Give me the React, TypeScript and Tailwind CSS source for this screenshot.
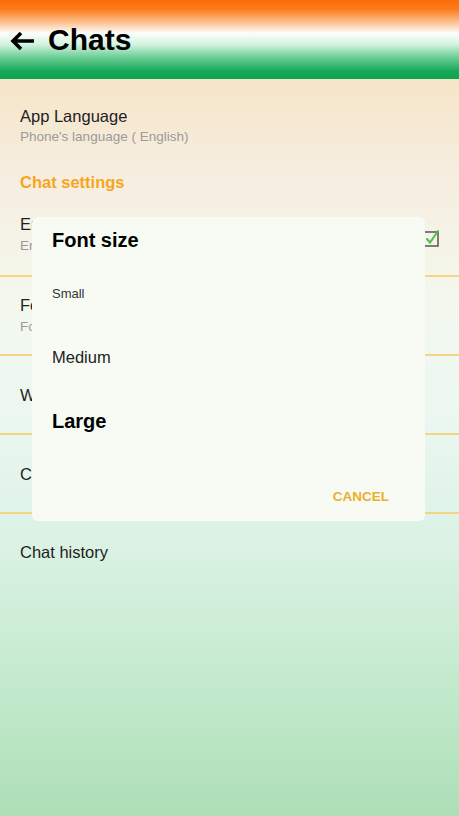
import React from "react";

const rows = [
  { title: "Enter is send", sub: "Enter key will send your message", check: true },
  { title: "Font size", sub: "Font size ( Medium )" },
  { title: "Wallpaper" },
  { title: "Chat backup" },
];

const Check = () => (
  <svg width="20" height="20" viewBox="0 0 20 20" className="shrink-0 mt-[8px]">
    <rect x="3" y="4" width="14" height="14" fill="none" stroke="#555" strokeWidth="1.5" />
    <path d="M6 11l3 3.5L17 3" fill="none" stroke="#4cc04c" strokeWidth="2" strokeLinecap="round" />
  </svg>
);

export default function App() {
  return (
    <div className="relative w-[459px] h-[816px] overflow-hidden font-['Liberation_Sans',Arial,sans-serif] bg-[linear-gradient(180deg,#f5dfb9_0%,#f6e5c9_10%,#f6eee0_22%,#f3f8ef_38%,#eaf7f0_52%,#dcf2e5_66%,#c8ecd2_80%,#addfb7_100%)]">
      <header className="h-[79px] flex items-center pl-[9px] gap-[12px] bg-[linear-gradient(180deg,#fb6c05_0%,#fc7d1e_12%,#fdc89c_30%,#fbfefb_42%,#d5f3e1_56%,#6fcf98_72%,#16a858_90%,#0da44f_100%)]">
        <svg width="27" height="22" viewBox="0 0 27 22" className="mt-[2px]">
          <path d="M25 11H4M12 3l-8 8 8 8" fill="none" stroke="#000" strokeWidth="3.6" strokeLinecap="butt" />
        </svg>
        <h1 className="text-[30px] font-bold text-black leading-none">Chats</h1>
      </header>

      <div className="pl-[20px] pt-[27px]">
        <div className="text-[16.5px] leading-[20px] text-[#1e1e1e]">App Language</div>
        <div className="mt-[2px] text-[13.5px] leading-[18px] text-[#9a9a9a]">Phone's language ( English)</div>
        <div className="mt-[26px] text-[16.5px] leading-[20px] font-bold text-[#f6a51d]">Chat settings</div>
      </div>

      <div className="mt-[1px]">
        {rows.map((r, i) => (
          <div key={r.title}>
            <div
              className={`flex items-center justify-between pl-[20px] pr-[18px] ${
                i === 0 ? "h-[82px]" : "h-[77px]"
              }`}
            >
              <div className="flex flex-col gap-[3px]">
                <div className="text-[16.5px] leading-[20px] text-[#1e1e1e]">{r.title}</div>
                {r.sub && <div className="text-[13.5px] leading-[18px] text-[#9a9a9a]">{r.sub}</div>}
              </div>
              {r.check && <Check />}
            </div>
            <div className="h-[2px] bg-[#f3d584]" />
          </div>
        ))}
        <div className="h-[77px] flex items-center pl-[20px] text-[16.5px] text-[#1e1e1e]">Chat history</div>
      </div>

      <div className="absolute left-[32px] top-[217px] w-[393px] h-[304px] rounded-[6px] bg-[#f7fbf4] pl-[20px] pt-[11px] flex flex-col">
        <div className="text-[20px] leading-[24px] font-bold text-black">Font size</div>
        <div className="mt-[33px] text-[13px] leading-[18px] text-[#333]">Small</div>
        <div className="mt-[43px] text-[16.5px] leading-[22px] text-[#222]">Medium</div>
        <div className="mt-[41px] text-[20px] leading-[24px] font-bold text-black">Large</div>
        <div className="mt-[55px] self-end pr-[36px] text-[13.5px] leading-[18px] font-bold text-[#efae2a]">CANCEL</div>
      </div>
    </div>
  );
}
